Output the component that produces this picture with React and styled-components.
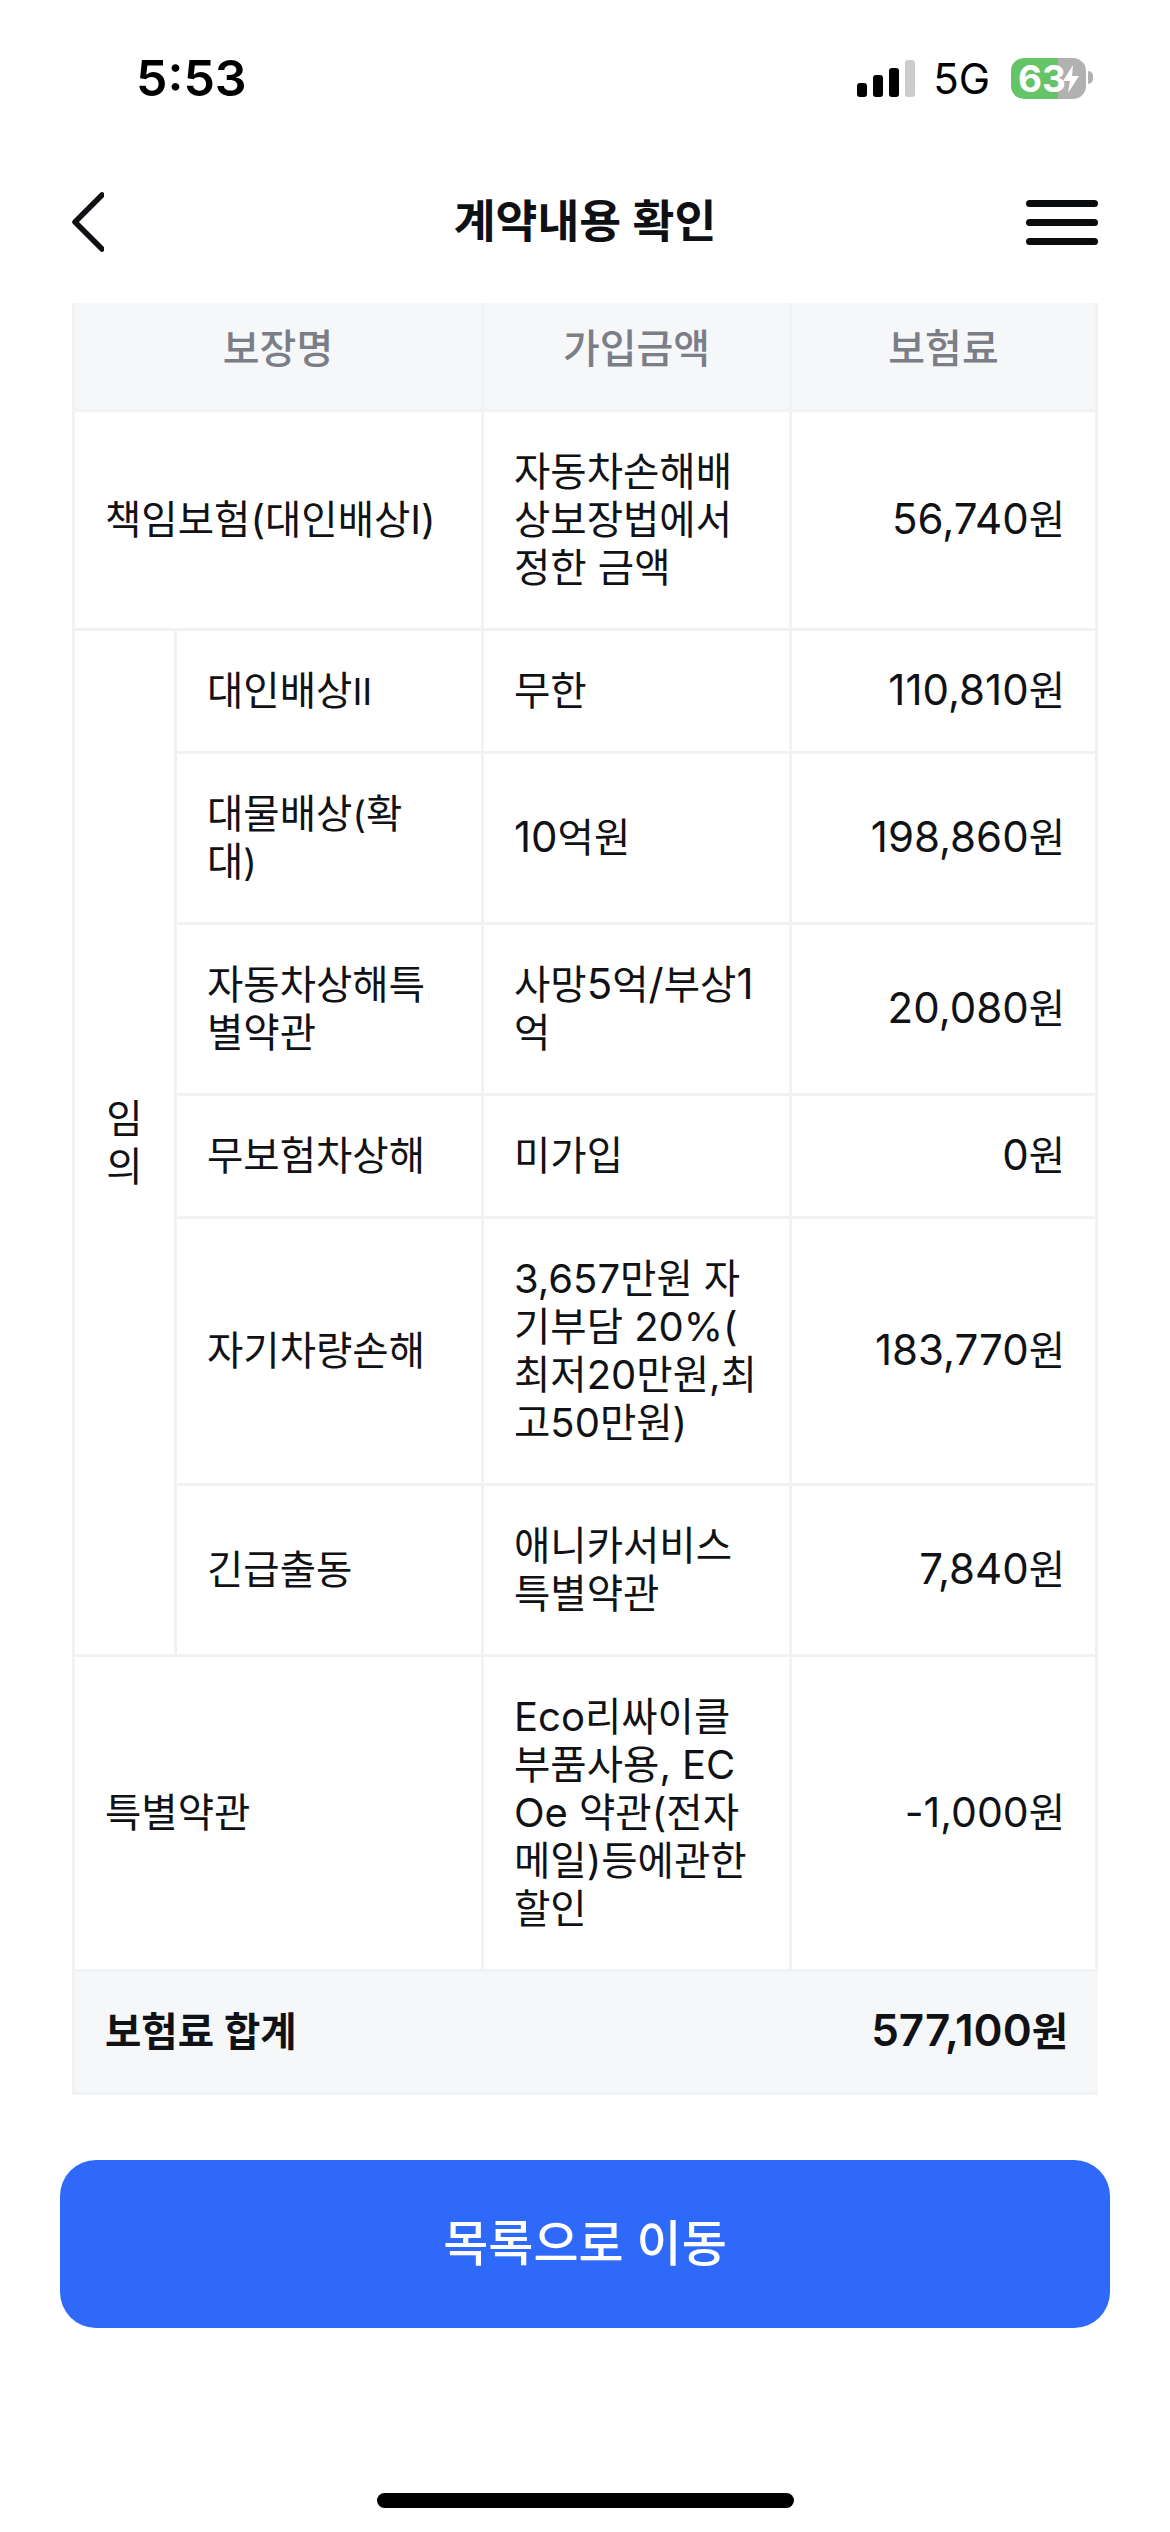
import React from "react";
import styled, { createGlobalStyle } from "styled-components";

const GlobalStyle = createGlobalStyle`
    html, body {
        margin: 0;
        padding: 0;
        background: #fff;
    }
`;

const Page = styled.div`
    width: 1170px;
    height: 2532px;
    overflow: hidden;
    background: #fff;
    font-family: Inter, "Noto Sans CJK KR", sans-serif;
    color: #111215;
`;

const StatusBar = styled.div`
    height: 156px;
    box-sizing: border-box;
    padding: 0 84px 0 136px;
    display: flex;
    align-items: center;
    justify-content: space-between;
`;

const Clock = styled.span`
    font-size: 50px;
    font-weight: 600;
    color: #000;
`;

const StatusIcons = styled.div`
    display: flex;
    align-items: center;
`;

const Signal = styled.div`
    display: flex;
    align-items: flex-end;
    gap: 6px;
    height: 37px;
    margin-right: 18px;
`;

const SignalBar = styled.i`
    display: block;
    width: 10px;
    height: ${(p) => p.$h}px;
    border-radius: 3px;
    background: ${(p) => (p.$off ? "#cccccc" : "#000")};
`;

const Network = styled.span`
    font-size: 42px;
    color: #000;
    margin-right: 21px;
`;

const Battery = styled.div`
    position: relative;
    width: 75px;
    height: 41px;
    border-radius: 13px;
    background: linear-gradient(90deg, #65c466 0 47px, #b1b1b1 47px 100%);

    &::after {
        content: "";
        position: absolute;
        left: 77px;
        top: 13px;
        width: 5px;
        height: 13px;
        border-radius: 0 6px 6px 0;
        background: #b1b1b1;
    }
`;

const BatteryLevel = styled.span`
    position: absolute;
    left: 7px;
    top: 0;
    font-size: 37px;
    line-height: 41px;
    font-weight: 700;
    color: #fff;
`;

const Bolt = styled.svg`
    position: absolute;
    left: 50px;
    top: 6px;
`;

const Nav = styled.div`
    height: 132px;
    margin-bottom: 15px;
    padding: 0 72px;
    display: grid;
    grid-template-columns: 1fr auto 1fr;
    align-items: center;
`;

const Title = styled.h1`
    margin: 0;
    font-size: 45.5px;
    line-height: 60px;
    font-weight: 600;
    color: #0f1013;
`;

const MenuButton = styled.div`
    justify-self: end;
    display: flex;
    flex-direction: column;
    gap: 12px;
`;

const MenuLine = styled.i`
    display: block;
    width: 72px;
    height: 7px;
    border-radius: 3.5px;
    background: #0b0c0e;
`;

const Table = styled.table`
    width: 1026px;
    margin-left: 72px;
    table-layout: fixed;
    border-collapse: separate;
    border-spacing: 0;
    border-left: 3px solid #f1f2f4;
    font-size: 39.5px;
    line-height: 48px;
`;

const Head = styled.th`
    padding: 22px 30px 36px;
    font-size: 40px;
    font-weight: 500;
    text-align: center;
    color: #7b7e87;
    background: #f6f7f9;
    border-right: 3px solid #f1f2f4;
    border-bottom: 3px solid #f1f2f4;
`;

const Cell = styled.td`
    padding: 36px 30px;
    text-align: ${(p) => p.$align || "left"};
    vertical-align: middle;
    white-space: pre-line;
    word-break: break-all;
    line-break: anywhere;
    border-right: 3px solid #f1f2f4;
    border-bottom: 3px solid #f1f2f4;
`;

const TotalCell = styled.td`
    padding: 36px 30px;
    text-align: ${(p) => p.$align || "left"};
    font-weight: 600;
    background: #f6f7f9;
    border-bottom: 3px solid #f1f2f4;
`;

// the latin runs sit larger than the hangul next to them
const Latin = styled.span`
    font-size: ${(p) => p.$size || 42}px;
    line-height: 1;
`;

const Button = styled.button`
    display: block;
    width: 1050px;
    height: 168px;
    margin: 65px 0 0 60px;
    padding: 0 0 9px;
    border: 0;
    border-radius: 36px;
    background: #2f69f9;
    color: #fff;
    font-family: inherit;
    font-size: 49px;
    font-weight: 500;
`;

const HomeBar = styled.div`
    width: 417px;
    height: 15px;
    margin: 165px 0 0 377px;
    border-radius: 8px;
    background: #000;
`;

const Mixed = ({ text, size }) =>
    text.split(/([0-9A-Za-z,.%/()-]+)/).map((part, i) =>
        i % 2 ? (
            <Latin key={i} $size={size}>
                {part}
            </Latin>
        ) : (
            part
        )
    );

const optional = [
    { name: "대인배상II", amount: "무한", price: "110,810원" },
    { name: "대물배상(확\n대)", amount: "10억원", price: "198,860원" },
    { name: "자동차상해특별약관", amount: "사망5억/부상1억", price: "20,080원" },
    { name: "무보험차상해", amount: "미가입", price: "0원" },
    { name: "자기차량손해", amount: "3,657만원 자기부담 20%(\n최저20만원,최\n고50만원)", amountSize: 40, price: "183,770원" },
    { name: "긴급출동", amount: "애니카서비스특별약관", price: "7,840원" },
];

const App = () => {
    return (
        <>
            <GlobalStyle />
            <Page>
                <StatusBar>
                    <Clock>5:53</Clock>
                    <StatusIcons>
                        <Signal>
                            <SignalBar $h={14} />
                            <SignalBar $h={22} />
                            <SignalBar $h={29} />
                            <SignalBar $h={37} $off />
                        </Signal>
                        <Network>5G</Network>
                        <Battery>
                            <BatteryLevel>63</BatteryLevel>
                            <Bolt width="20" height="30" viewBox="0 0 20 30">
                                <path d="M12 1 L2 17 H9 L7 29 L18 12 H11 Z" fill="#fff" />
                            </Bolt>
                        </Battery>
                    </StatusIcons>
                </StatusBar>

                <Nav>
                    <svg width="32" height="60" viewBox="0 0 32 60" fill="none">
                        <path d="M30 3 L3 30 L30 57" stroke="#0f1013" strokeWidth="5.5" strokeLinecap="round" strokeLinejoin="round" />
                    </svg>
                    <Title>계약내용 확인</Title>
                    <MenuButton>
                        <MenuLine />
                        <MenuLine />
                        <MenuLine />
                    </MenuButton>
                </Nav>

                <Table>
                    <colgroup>
                        <col style={{ width: 102 }} />
                        <col style={{ width: 307 }} />
                        <col style={{ width: 308 }} />
                        <col style={{ width: 306 }} />
                    </colgroup>
                    <thead>
                        <tr>
                            <Head colSpan={2}>보장명</Head>
                            <Head>가입금액</Head>
                            <Head>보험료</Head>
                        </tr>
                    </thead>
                    <tbody>
                        <tr>
                            <Cell colSpan={2}><Mixed text="책임보험(대인배상I)" size={40} /></Cell>
                            <Cell>자동차손해배상보장법에서 정한 금액</Cell>
                            <Cell $align="right"><Mixed text="56,740원" /></Cell>
                        </tr>
                        {optional.map((row, i) => (
                            <tr key={row.name}>
                                {i === 0 && (
                                    <Cell rowSpan={optional.length} $align="center">
                                        임의
                                    </Cell>
                                )}
                                <Cell><Mixed text={row.name} size={37} /></Cell>
                                <Cell><Mixed text={row.amount} size={row.amountSize} /></Cell>
                                <Cell $align="right"><Mixed text={row.price} /></Cell>
                            </tr>
                        ))}
                        <tr>
                            <Cell colSpan={2}>특별약관</Cell>
                            <Cell><Mixed text="Eco리싸이클부품사용, ECOe 약관(전자메일)등에관한 할인" size={40} /></Cell>
                            <Cell $align="right"><Mixed text="-1,000원" size={41} /></Cell>
                        </tr>
                        <tr>
                            <TotalCell colSpan={3}>보험료 합계</TotalCell>
                            <TotalCell $align="right"><Mixed text="577,100원" size={44} /></TotalCell>
                        </tr>
                    </tbody>
                </Table>

                <Button>목록으로 이동</Button>
                <HomeBar />
            </Page>
        </>
    );
};

export default App;
